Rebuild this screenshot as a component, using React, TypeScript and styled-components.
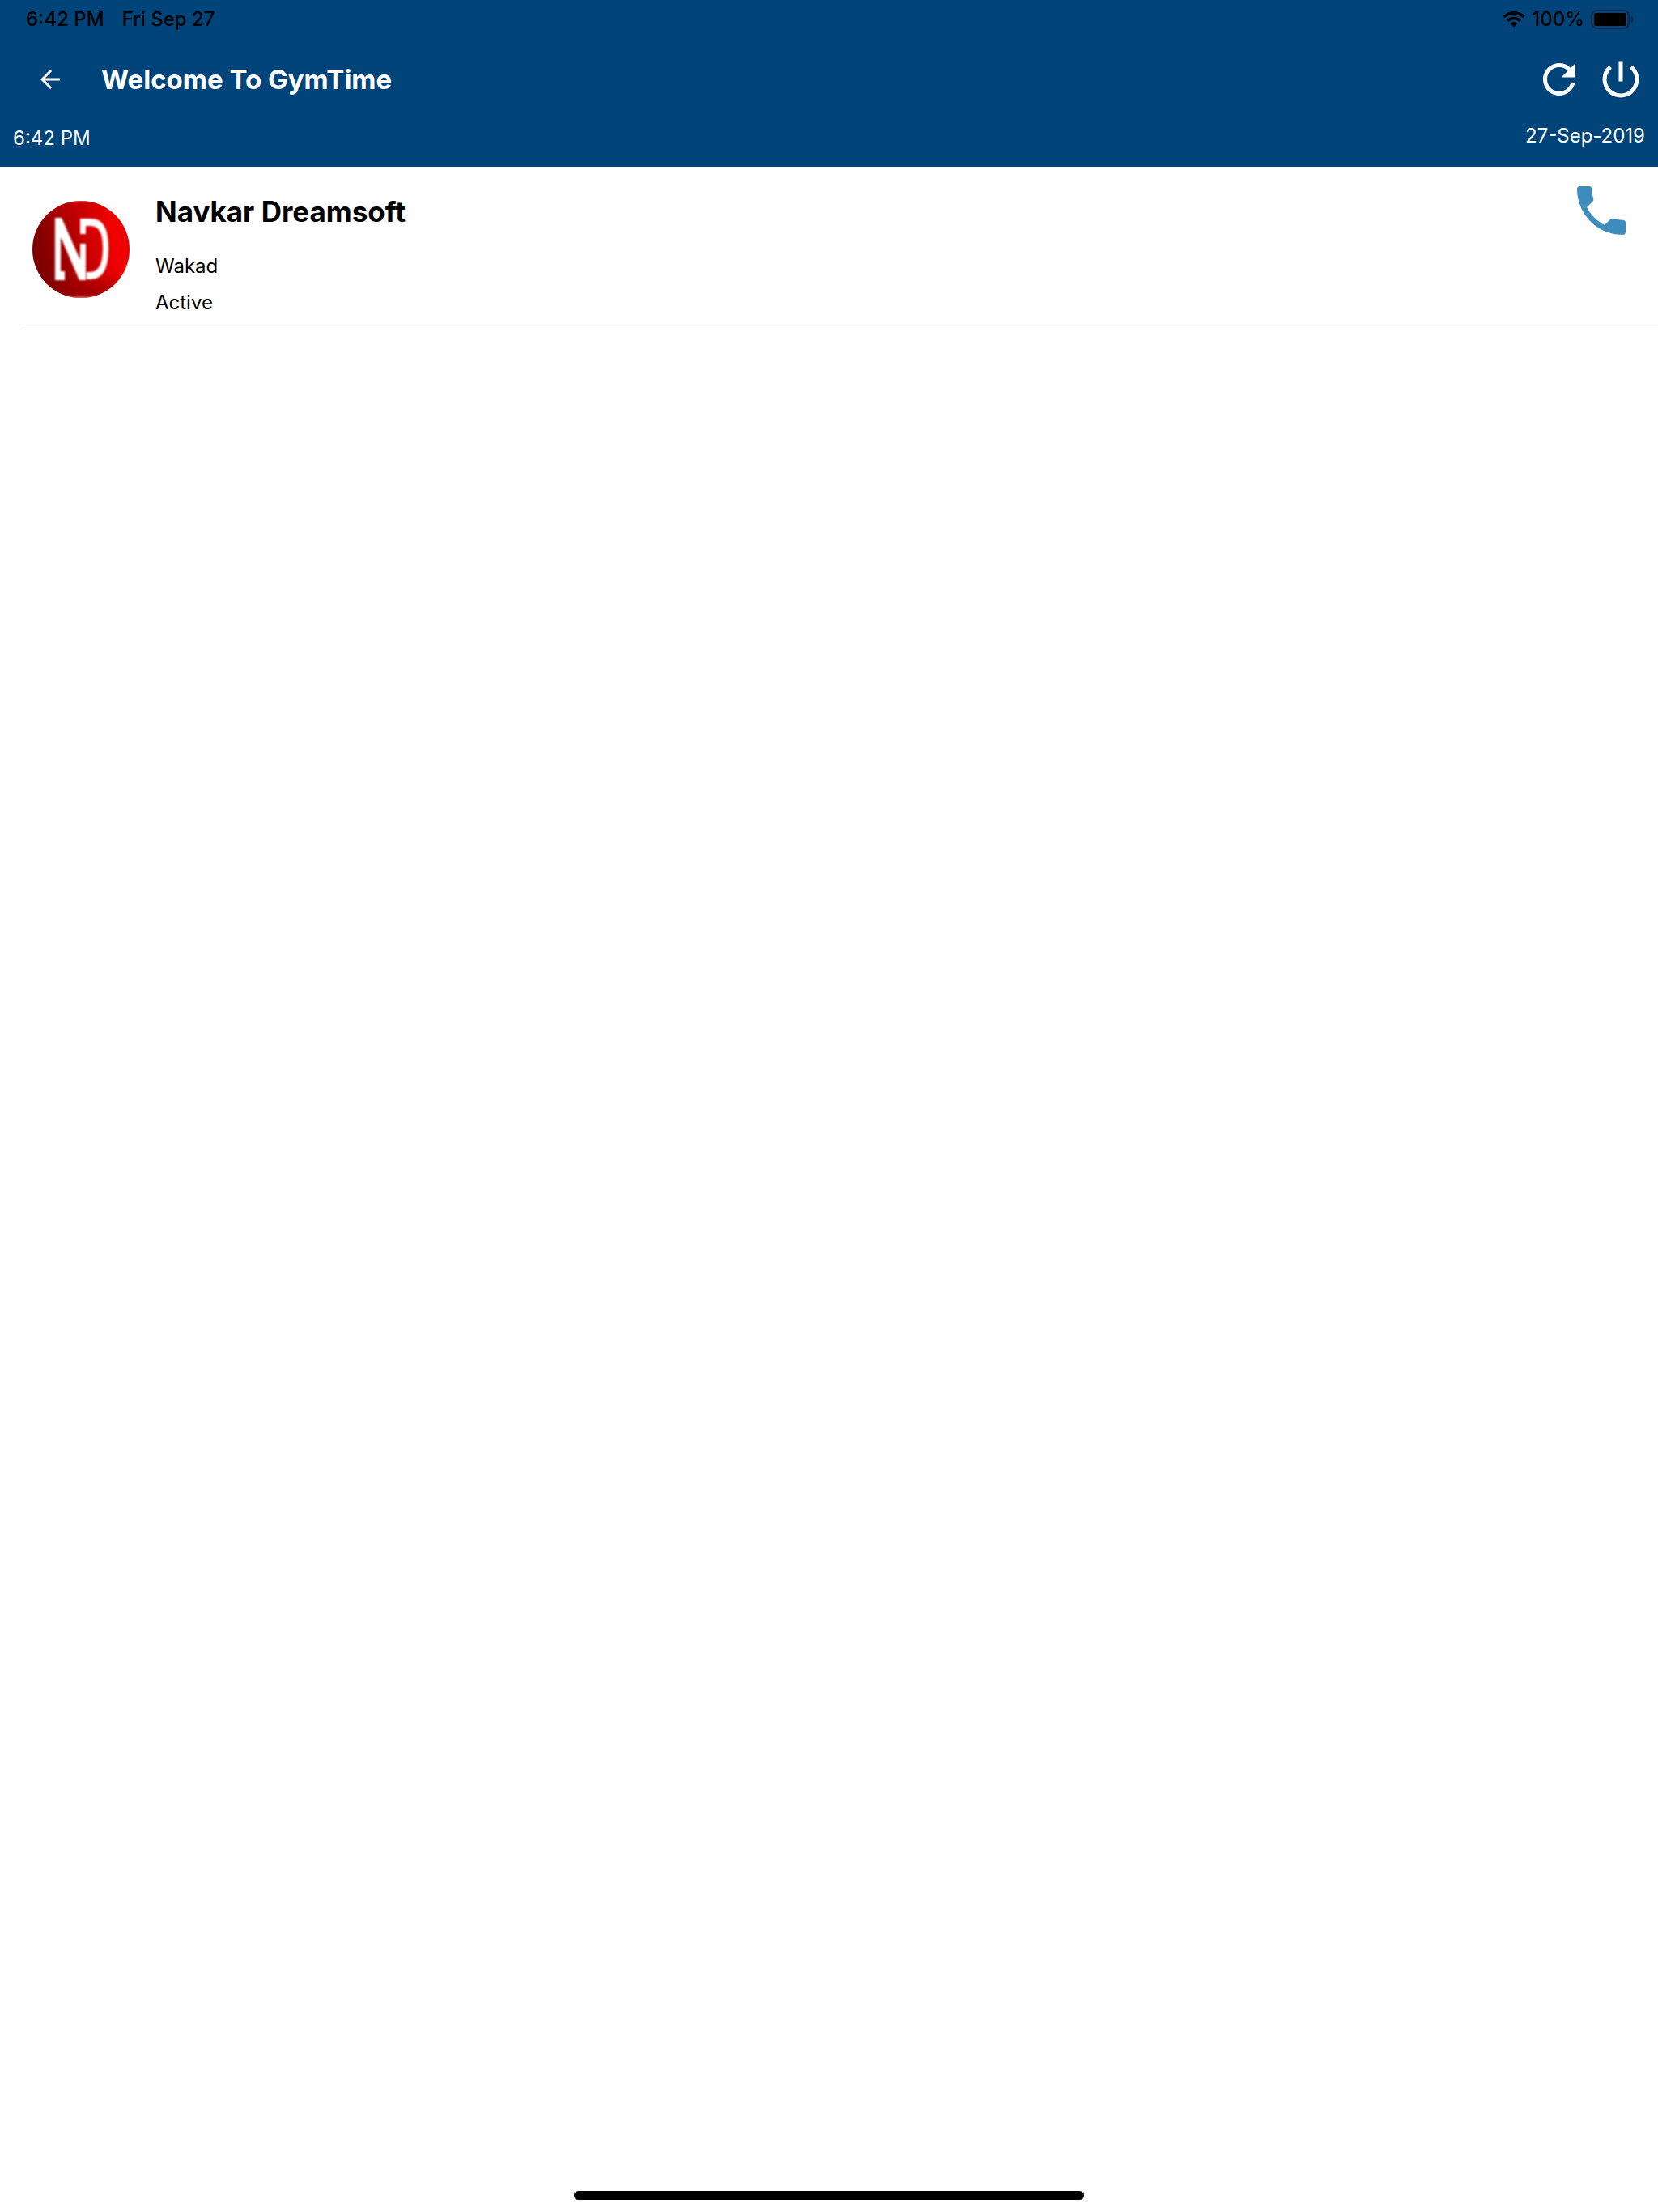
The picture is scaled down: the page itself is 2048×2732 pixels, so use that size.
import React from 'react';
import styled, { createGlobalStyle } from 'styled-components';
import { MdArrowBack, MdPhone, MdPowerSettingsNew, MdRefresh } from 'react-icons/md';

type Member = {
	name: string;
	area: string;
	status: string;
	phone: string;
};

const members: Member[] = [
	{ name: 'Navkar Dreamsoft', area: 'Wakad', status: 'Active', phone: '' },
];

const WifiIcon = () => (
	<svg width="28" height="20" viewBox="0 0 28 20" aria-hidden="true">
		<path d="M0.4 5.8C8 -1.9 20 -1.9 27.6 5.8L25.2 8.3C18.8 2.2 9.2 2.2 2.8 8.3Z" />
		<path d="M5 10.4C10 5.4 18 5.4 23 10.4L20.5 12.9C16.8 9.5 11.2 9.5 7.5 12.9Z" />
		<path d="M9.6 15C12 12.7 16 12.7 18.4 15L14 19.6Z" />
	</svg>
);

const BatteryIcon = () => (
	<svg width="54" height="24" viewBox="0 0 54 24" aria-hidden="true">
		<rect x="1" y="1" width="46" height="22" rx="6" fill="none" stroke="#000" strokeOpacity="0.4" strokeWidth="2" />
		<rect x="4" y="4" width="40" height="16" rx="3" />
		<path d="M50 8C53.6 9 53.6 15 50 16Z" fillOpacity="0.4" />
	</svg>
);

const ClubLogo = () => (
	<Logo width="120" height="120" viewBox="0 0 120 120" role="img" aria-label="Navkar Dreamsoft">
		<defs>
			<linearGradient id="logoRed" x1="0" y1="0.62" x2="1" y2="0.38">
				<stop offset="0" stopColor="#780000" />
				<stop offset="0.2" stopColor="#8c0000" />
				<stop offset="0.55" stopColor="#c40003" />
				<stop offset="0.85" stopColor="#f20000" />
				<stop offset="1" stopColor="#ea0000" />
			</linearGradient>
			<linearGradient id="logoShade" x1="0" y1="0" x2="0" y2="1">
				<stop offset="0" stopColor="#e06060" stopOpacity="0.8" />
				<stop offset="0.03" stopColor="#c00000" stopOpacity="0.3" />
				<stop offset="0.2" stopColor="#c00000" stopOpacity="0" />
				<stop offset="0.75" stopColor="#900000" stopOpacity="0" />
				<stop offset="0.96" stopColor="#900000" stopOpacity="0.6" />
				<stop offset="1" stopColor="#e08080" stopOpacity="0.8" />
			</linearGradient>
			<clipPath id="logoClip">
				<circle cx="60" cy="60" r="60" />
			</clipPath>
			<filter id="logoSoft">
				<feGaussianBlur stdDeviation="0.9" />
			</filter>
		</defs>
		<g clipPath="url(#logoClip)">
			<rect width="120" height="120" fill="url(#logoRed)" />
			<rect width="120" height="120" fill="url(#logoShade)" />
			<g fill="#fff" filter="url(#logoSoft)">
				<path d="M28 21H36L59 73V53H66V98H58L35 45V87H40V98H28Z" />
				<path d="M59 22H72C87 22 94 34 94 58C94 84 87 97 71 97H67V88H71C82 88 87 78 87 58C87 39 82 31 71 31H66V41H59Z" />
			</g>
		</g>
	</Logo>
);

function App() {
	return (
		<Page>
			<GlobalStyle />
			<Header>
				<StatusBar>
					<StatusGroup $gap={22}>
						<span>6:42 PM</span>
						<span>Fri Sep 27</span>
					</StatusGroup>
					<StatusGroup $gap={8}>
						<WifiIcon />
						<span>100%</span>
						<BatteryIcon />
					</StatusGroup>
				</StatusBar>
				<Toolbar>
					<IconButton aria-label="Back">
						<MdArrowBack size={36} />
					</IconButton>
					<Title>Welcome To GymTime</Title>
					<Actions>
						<IconButton aria-label="Refresh">
							<MdRefresh size={60} />
						</IconButton>
						<IconButton aria-label="Log out">
							<MdPowerSettingsNew size={60} />
						</IconButton>
					</Actions>
				</Toolbar>
				<DateBar>
					<Time>6:42 PM</Time>
					<time>27-Sep-2019</time>
				</DateBar>
			</Header>
			<MemberList>
				{members.map((member) => (
					<MemberRow key={member.name}>
						<ClubLogo />
						<Details>
							<Name>{member.name}</Name>
							<Info>{member.area}</Info>
							<Info>{member.status}</Info>
						</Details>
						<CallLink href={`tel:${member.phone}`} aria-label={`Call ${member.name}`}>
							<MdPhone size={80} />
						</CallLink>
					</MemberRow>
				))}
			</MemberList>
			<HomeIndicator />
		</Page>
	);
}

const GlobalStyle = createGlobalStyle`
	* {
		box-sizing: border-box;
	}
	body {
		margin: 0;
		background: #fff;
		color: #000;
		font-family: Inter, 'Liberation Sans', sans-serif;
		font-size: 24px;
		line-height: 32px;
	}
	svg {
		display: block;
		flex-shrink: 0;
	}
`;

const Page = styled.div`
	display: flex;
	flex-direction: column;
	min-height: 100vh;
`;

const Header = styled.header`
	background: #004479;
	color: #fff;
`;

const StatusBar = styled.div`
	display: flex;
	justify-content: space-between;
	padding: 8px 29px 4px 32px;
	color: #000;
	font-weight: 500;
`;

const StatusGroup = styled.div<{ $gap: number }>`
	display: flex;
	align-items: center;
	gap: ${({ $gap }) => $gap}px;
`;

const Toolbar = styled.div`
	display: flex;
	align-items: center;
	height: 108px;
	padding: 0 16px 0 44px;
`;

const IconButton = styled.button`
	padding: 0;
	border: 0;
	background: none;
	color: inherit;
	cursor: pointer;
`;

const Title = styled.h1`
	flex: 1;
	margin: 0 0 0 45px;
	font-size: 33px;
	font-weight: 700;
	line-height: 40px;
`;

const Actions = styled.div`
	display: flex;
	gap: 16px;
`;

const DateBar = styled.div`
	display: flex;
	align-items: flex-start;
	justify-content: space-between;
	padding: 0 16px 19px;
`;

const Time = styled.time`
	padding-top: 3px;
`;

const MemberList = styled.ul`
	flex: 1;
	margin: 0;
	padding: 0 0 0 30px;
	list-style: none;
`;

const MemberRow = styled.li`
	display: flex;
	align-items: flex-start;
	min-height: 202px;
	padding: 14px 30px 0 10px;
	border-bottom: 1px solid #c8c7cc;
`;

const Logo = styled.svg`
	margin-top: 28px;
`;

const Details = styled.div`
	flex: 1;
	padding: 20px 0 10px 32px;
`;

const Name = styled.h2`
	margin: 0 0 24px;
	font-size: 35px;
	font-weight: 700;
	line-height: 42px;
`;

const Info = styled.p`
	margin: 0;
	line-height: 45px;
`;

const CallLink = styled.a`
	color: #3c8dbc;
`;

const HomeIndicator = styled.div`
	width: 30.8%;
	height: 11px;
	margin: 0 auto 15px;
	border-radius: 6px;
	background: #000;
`;

export default App;
